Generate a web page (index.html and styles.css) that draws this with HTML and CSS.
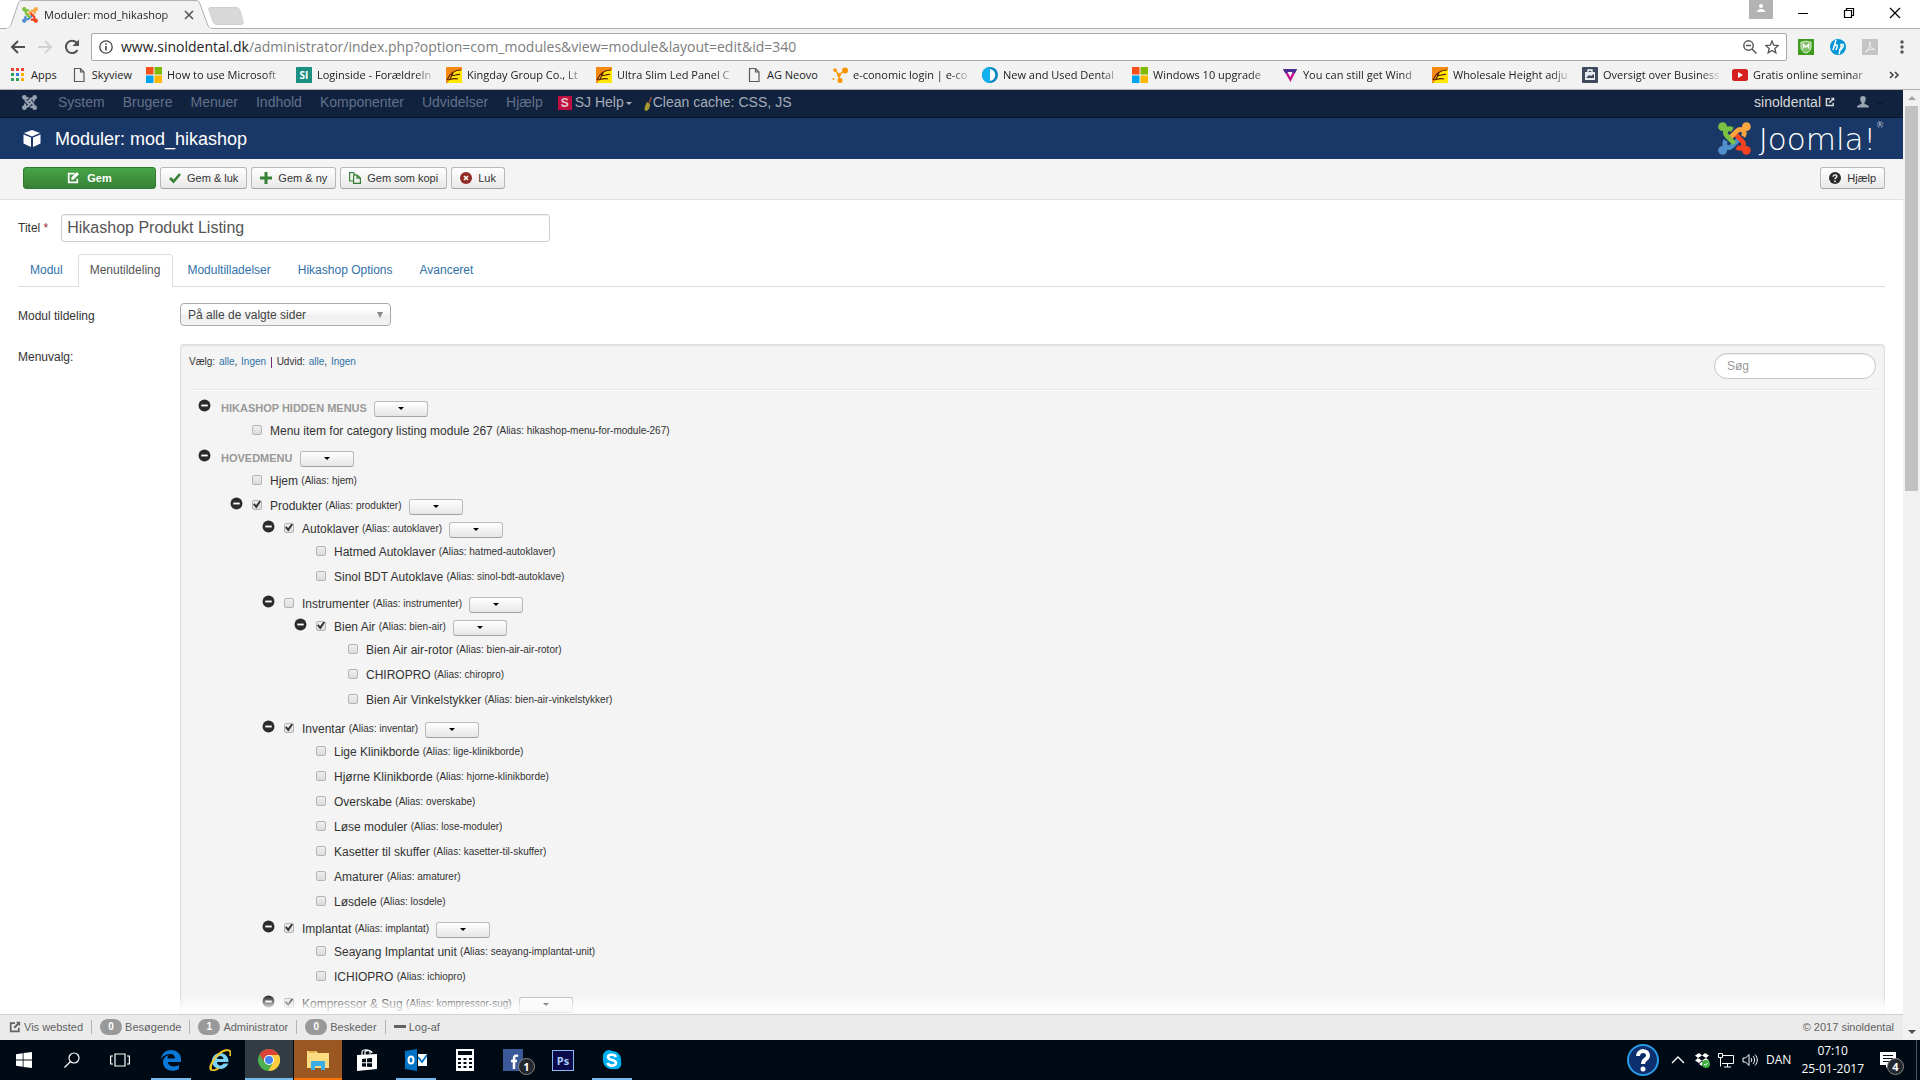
FILE: index.html
```html
<!DOCTYPE html>
<html lang="da">
<head>
  <meta charset="utf-8">
  <title>Moduler: mod_hikashop</title>
  <meta name="viewport" content="width=device-width, initial-scale=1">
  <link rel="stylesheet" href="styles.css">
</head>
<body>

<svg class="sprite" aria-hidden="true">
  <symbol id="joomla" viewBox="0 0 32 32">
    <g fill="none" stroke-width="4.6">
      <path stroke="#4f90cd" d="M7.500 18C5 22 8 26 12 24.500L14 23L21 16"/>
      <path stroke="#f44321" d="M18 24.500C22 27 26 24 24.500 20L23 18L16 11"/>
      <path stroke="#f9a541" d="M24.500 14C27 10 24 6 20 7.500L18 9L11 16"/>
      <path stroke="#7ac143" d="M14 7.500C10 5 6 8 7.500 12L9 14L16 21"/>
    </g>
    <circle cx="4.500" cy="4.500" r="4.300" fill="#7ac143"/>
    <circle cx="27.500" cy="4.500" r="4.300" fill="#f9a541"/>
    <circle cx="4.500" cy="27.500" r="4.300" fill="#4f90cd"/>
    <circle cx="27.500" cy="27.500" r="4.300" fill="#f44321"/>
  </symbol>
  <symbol id="joomla-mono" viewBox="0 0 32 32">
    <g fill="none" stroke="currentColor" stroke-width="4.500">
      <path d="M7 18C5 22 8 26 12 24.500L14 23L22 15"/>
      <path d="M18 24.500C22 27 26 24 24.500 20L23 18L15 10"/>
      <path d="M24.500 14C27 10 24 6 20 7.500L18 9L10 17"/>
      <path d="M14 7.500C10 5 6 8 7.500 12L9 14L17 22"/>
    </g>
    <g fill="currentColor"><circle cx="5" cy="5" r="5"/><circle cx="27" cy="5" r="5"/><circle cx="5" cy="27" r="5"/><circle cx="27" cy="27" r="5"/></g>
  </symbol>
  <symbol id="page" viewBox="0 0 16 16"><path d="M3.500 1.500h6l3.500 3.500v9.500h-9.500zM9.500 1.500v3.500h3.500" fill="none" stroke="#5a5a5a" stroke-width="1.200"/></symbol>
  <symbol id="microsoft" viewBox="0 0 16 16"><path fill="#f6511d" d="M0 0h7.500v7.500H0z"/><path fill="#7fba00" d="M8.500 0H16v7.500H8.500z"/><path fill="#00a4ef" d="M0 8.500h7.500V16H0z"/><path fill="#ffb900" d="M8.500 8.500H16V16H8.500z"/></symbol>
  <symbol id="trade" viewBox="0 0 16 16"><path fill="#ffe600" d="M0 0h16v16H0z"/><path fill="#f58a12" d="M0 0h16v3C8 3 3 8 2 16H0z"/><path d="M1 13C4 6 9 3 15 3M4 12l3-6M5 8.500c3 1 6-2 9-1M2 13c4-1 6-2 10-1" fill="none" stroke="#5a1c00" stroke-width="1.200"/></symbol>
  <symbol id="toggle" viewBox="0 0 14 14"><circle cx="7" cy="7" r="6.400" fill="#2b2b2b"/><path d="M3.500 6h7v2h-7z" fill="#fff"/></symbol>
  <symbol id="external" viewBox="0 0 14 14"><path d="M7 2.500H2v9.500h9.500V8" fill="none" stroke="currentColor" stroke-width="2"/><path d="M8 1h5v5l-1.700-1.700L7 8.700 5.300 7l4.400-4.300z" fill="currentColor"/></symbol>
</svg>

<header class="browser">
  <div class="tabstrip">
    <div class="tab">
      <svg class="tab-edge" viewBox="0 0 206 29" preserveAspectRatio="none"><path d="M0 28.500C4 28.500 5 25 6 22L12 4C13 1 14 .5 16 .5H190C192 .5 193 1 194 4L201 23C202 26 203 28.500 206 28.500" fill="#f2f2f2" stroke="#b0b0b0"/><path d="M1 29h204" stroke="#f2f2f2" stroke-width="2"/></svg>
      <svg class="icon16"><use href="#joomla"/></svg>
      <span class="tab-title">Moduler: mod_hikashop</span>
      <button class="tab-close" aria-label="Luk fane"><svg viewBox="0 0 10 10"><path d="M1 1l8 8M9 1L1 9" stroke="#555" stroke-width="1.600"/></svg></button>
    </div>
    <svg class="newtab" viewBox="0 0 36 18"><path d="M3 .5h25c2 0 3 1 4 3l3 11c.5 2 0 3-2 3H9c-2 0-3-1-4-3L1 3C.5 1 1 .5 3 .5z" fill="#d8d8d8" stroke="#cfcfcf"/></svg>
    <div class="window-buttons">
      <svg class="profile" viewBox="0 0 24 19"><path d="M0 0h24v19H0z" fill="#b3b3b3"/><circle cx="12" cy="6" r="2" fill="#fff"/><path d="M8 12c0-4 8-4 8 0z" fill="#fff"/></svg>
      <svg class="win-btn" viewBox="0 0 12 12"><path d="M1 6.500h10" stroke="#000"/></svg>
      <svg class="win-btn" viewBox="0 0 12 12"><path d="M1.500 3.500h7v7h-7zM3.500 3V1.500h7v7H9" fill="none" stroke="#000" stroke-width="1.200"/></svg>
      <svg class="win-btn" viewBox="0 0 12 12"><path d="M1 1l10 10M11 1L1 11" stroke="#000" stroke-width="1.200"/></svg>
    </div>
  </div>

  <div class="addressbar">
    <svg class="nav-icon" viewBox="0 0 16 16"><path d="M15 8H2M8 2L2 8l6 6" fill="none" stroke="#505050" stroke-width="2"/></svg>
    <svg class="nav-icon" viewBox="0 0 16 16"><path d="M1 8h13M8 2l6 6-6 6" fill="none" stroke="#d2d2d2" stroke-width="2"/></svg>
    <svg class="nav-icon" viewBox="0 0 16 16"><path d="M13.500 11A6.200 6.200 0 1 1 12.500 3.500" fill="none" stroke="#505050" stroke-width="2"/><path d="M15 .5V7H8.500z" fill="#505050"/></svg>
    <div class="omnibox">
      <svg class="icon14" viewBox="0 0 14 14"><circle cx="7" cy="7" r="6.200" fill="none" stroke="#444" stroke-width="1.300"/><path d="M6.200 6h1.600v4.500H6.200zM6.200 3.200h1.600v1.600H6.200z" fill="#444"/></svg>
      <div class="url"><span class="host">www.sinoldental.dk</span>/administrator/index.php?option=com_modules&amp;view=module&amp;layout=edit&amp;id=340</div>
      <svg class="icon14" viewBox="0 0 14 14"><circle cx="5.500" cy="5.500" r="4.700" fill="none" stroke="#555" stroke-width="1.400"/><path d="M3 5.500h5M9 9l4.500 4.500" stroke="#555" stroke-width="1.500"/></svg>
      <svg class="icon14" viewBox="0 0 14 14"><path d="M7 1l1.700 4.200 4.600.3-3.500 2.900 1.100 4.500L7 10.500l-3.900 2.400 1.100-4.500L.7 5.500l4.600-.3z" fill="none" stroke="#555" stroke-width="1.300"/></svg>
    </div>
    <div class="extensions">
      <svg class="icon16" viewBox="0 0 16 16"><path d="M0 0h16v16H0z" fill="#3f9b1b"/><path d="M3 3c2 0 4-.5 5-1 1 .5 3 1 5 1v5c0 3-2 5-5 6-3-1-5-3-5-6z" fill="#7fc062" stroke="#e6f3df"/><path d="M5.500 9.500V5.500L8 8l2.500-2.500v4" fill="none" stroke="#fff" stroke-width="1.500"/></svg>
      <svg class="icon16" viewBox="0 0 16 16"><circle cx="8" cy="8" r="8" fill="#0096d6"/><path d="M6 1L3 11M4 7.500c3-3 4-1 3 1L6 11M9 15l3-10M10 6c3-2 4 0 3 2s-2 3-4 2.500" fill="none" stroke="#fff" stroke-width="1.500"/></svg>
      <svg class="icon16" viewBox="0 0 16 16"><path d="M0 0h16v16H0z" fill="#c4c4c4"/><path d="M3 13c3-1 6-7 5-10-2 1 1 7 5 7.500-3-1-7 0-10 2.500z" fill="none" stroke="#f2f2f2"/></svg>
      <svg class="icon16" viewBox="0 0 16 16"><g fill="#555"><circle cx="8" cy="3" r="1.700"/><circle cx="8" cy="8" r="1.700"/><circle cx="8" cy="13" r="1.700"/></g></svg>
    </div>
  </div>

  <nav class="bookmarks">
    <a href="#" class="short"><svg class="icon16" viewBox="0 0 16 16"><path fill="#ea4335" d="M1 1h3v3H1zM6 1h3v3H6zM11 1h3v3h-3z"/><path fill="#34a05a" d="M1 6h3v3H1zM1 11h3v3H1zM6 11h3v3H6z"/><path fill="#2f7de1" d="M6 6h3v3H6z"/><path fill="#fbb000" d="M11 6h3v3h-3zM11 11h3v3h-3z"/></svg><span>Apps</span></a>
    <a href="#" class="short"><svg class="icon16"><use href="#page"/></svg><span>Skyview</span></a>
    <a href="#"><svg class="icon16"><use href="#microsoft"/></svg><span>How to use Microsoft</span></a>
    <a href="#"><b class="si icon16">SI</b><span>Loginside - ForældreIn</span></a>
    <a href="#"><svg class="icon16"><use href="#trade"/></svg><span>Kingday Group Co., Lt</span></a>
    <a href="#"><svg class="icon16"><use href="#trade"/></svg><span>Ultra Slim Led Panel C</span></a>
    <a href="#" class="short"><svg class="icon16"><use href="#page"/></svg><span>AG Neovo</span></a>
    <a href="#"><svg class="icon16" viewBox="0 0 16 16"><path d="M3 3l4 5 5-4M7 8v5" fill="none" stroke="#f90" stroke-width="1.500"/><g fill="#f79400"><circle cx="3" cy="3" r="1.800"/><circle cx="13" cy="3.500" r="3"/><circle cx="7" cy="8" r="2"/><circle cx="8" cy="13.500" r="2.500"/><circle cx="1.500" cy="12" r="1"/></g></svg><span>e-conomic login | e-co</span></a>
    <a href="#"><svg class="icon16" viewBox="0 0 16 16"><circle cx="8" cy="8" r="8" fill="#0b87c0"/><path d="M8 0a8 8 0 0 0 0 16z" fill="#12b0ee"/><path d="M8 2c7 1 7 11 0 12z" fill="#f4fafd"/></svg><span>New and Used Dental</span></a>
    <a href="#"><svg class="icon16"><use href="#microsoft"/></svg><span>Windows 10 upgrade</span></a>
    <a href="#"><svg class="icon16" viewBox="0 0 16 16"><path d="M1 2h14l-6.500 13z" fill="#c2188f"/><path d="M1 2h14l-2 4H3z" fill="#4b2e91"/><path d="M5.500 5h5L8.300 10z" fill="#fff"/></svg><span>You can still get Wind</span></a>
    <a href="#"><svg class="icon16"><use href="#trade"/></svg><span>Wholesale Height adju</span></a>
    <a href="#"><svg class="icon16" viewBox="0 0 16 16"><rect width="16" height="16" rx="1" fill="#3e4a5c"/><path d="M6 5V3h4v2" fill="none" stroke="#fff" stroke-width="1.300"/><path d="M3 5h10v8H3z" fill="#e9ecef"/><path d="M4 11l3-3 2 1 3-2v4z" fill="#3e4a5c"/></svg><span>Oversigt over Business</span></a>
    <a href="#"><svg class="icon16" viewBox="0 0 16 16"><rect y="2" width="16" height="12" rx="2.500" fill="#d6201f"/><path d="M6 5l5 3-5 3z" fill="#fff"/></svg><span>Gratis online seminar</span></a>
    <a href="#" class="overflow" aria-label="Flere bogmærker"><svg class="icon12" viewBox="0 0 12 12"><path d="M2 3l3 3-3 3M7 3l3 3-3 3" fill="none" stroke="#444" stroke-width="1.600"/></svg></a>
  </nav>
</header>

<div class="viewport">
  <div class="admin">
    <nav class="navbar">
      <a href="#" class="brand" aria-label="Joomla"><svg><use href="#joomla-mono"/></svg></a>
      <a href="#">System</a>
      <a href="#">Brugere</a>
      <a href="#">Menuer</a>
      <a href="#">Indhold</a>
      <a href="#">Komponenter</a>
      <a href="#">Udvidelser</a>
      <a href="#">Hjælp</a>
      <a href="#" class="extra"><b class="sj">S</b>SJ Help<i class="caret"></i></a>
      <span class="extra cache"><svg class="broom" viewBox="0 0 8 14"><path d="M7.500 0L5 6" stroke="#9a4b35" stroke-width="1.500"/><path d="M3 5l3 2c0 4-2 7-4 7S0 10 3 5z" fill="#a79a32"/></svg>Clean cache: <a href="#">CSS</a>, <a href="#">JS</a></span>
      <a href="#" class="site">sinoldental <svg class="icon10"><use href="#external"/></svg></a>
      <a href="#" class="user" aria-label="Bruger"><svg class="icon12" viewBox="0 0 12 12"><path d="M6 0c4 0 3 5 1.500 6.500V8C10 9 12 9 12 11.500H0C0 9 2 9 4.500 8V6.500C3 5 2 0 6 0z" fill="#9aa3b2"/></svg><i class="caret"></i></a>
    </nav>

    <header class="page-header">
      <svg class="cube" viewBox="0 0 18 18"><path d="M9 0l8 3-8 3.500L1 3zM.5 4.500l7.500 3V17L.5 13.500zM17.500 4.500l-7.500 3V17l7.500-3.500z" fill="#fff"/></svg>
      <h1>Moduler: mod_hikashop</h1>
      <div class="logo"><svg class="logo-mark"><use href="#joomla"/></svg><span>Joomla!</span><sup>®</sup></div>
    </header>

    <div class="toolbar">
      <button class="btn btn-success"><svg class="icon12" viewBox="0 0 14 14"><path d="M9 2H2v10h10V8" fill="none" stroke="#fff" stroke-width="2"/><path d="M5 6.500L11.500 0 14 2.500 7.500 9H5z" fill="#fff"/></svg>Gem</button>
      <button class="btn"><svg class="icon12" viewBox="0 0 12 12"><path d="M1 6l3.500 3.500L11 2" fill="none" stroke="#378137" stroke-width="2.600"/></svg>Gem &amp; luk</button>
      <button class="btn"><svg class="icon12" viewBox="0 0 12 12"><path d="M6 0v12M0 6h12" stroke="#378137" stroke-width="3"/></svg>Gem &amp; ny</button>
      <button class="btn"><svg class="icon12" viewBox="0 0 12 12"><path d="M4 9H.6V.6h3.600L7 3.500M4.600 3h3.600l3.200 3v5.400H4.600zM8 3v3.200h3.400" fill="none" stroke="#378137" stroke-width="1.200"/></svg>Gem som kopi</button>
      <button class="btn"><svg class="icon12" viewBox="0 0 12 12"><circle cx="6" cy="6" r="6" fill="#942a25"/><path d="M4 4l4 4M8 4L4 8" stroke="#fff" stroke-width="1.600"/></svg>Luk</button>
      <button class="btn btn-help"><svg class="icon12" viewBox="0 0 12 12"><circle cx="6" cy="6" r="6" fill="#2b2b2b"/><path d="M4.200 4.700c0-2.600 4-2.300 3.600 0C7.600 5.800 6 5.800 6 7.200" fill="none" stroke="#fff" stroke-width="1.400"/><circle cx="6" cy="9.300" r=".9" fill="#fff"/></svg>Hjælp</button>
    </div>

    <main class="content">
      <div class="title-row">
        <label for="title">Titel <span class="star">*</span></label>
        <input id="title" class="title-input" type="text" value="Hikashop Produkt Listing">
      </div>

      <nav class="nav-tabs">
        <a href="#">Modul</a>
        <a href="#" class="active">Menutildeling</a>
        <a href="#">Modultilladelser</a>
        <a href="#">Hikashop Options</a>
        <a href="#">Avanceret</a>
      </nav>

      <div class="control-group">
        <label class="control-label" for="assignment">Modul tildeling</label>
        <div class="select-wrap">
          <select id="assignment"><option>På alle de valgte sider</option></select>
        </div>
      </div>

      <div class="control-group menu-group">
        <div class="control-label">Menuvalg:</div>
        <section class="well">
          <div class="well-head">
            <div class="picks">Vælg: <a href="#">alle</a>, <a href="#">Ingen</a> <i class="bar"></i> Udvid: <a href="#">alle</a>, <a href="#">Ingen</a></div>
            <input class="search" type="text" placeholder="Søg" aria-label="Søg">
          </div>

          <ul class="tree">
            <li>
              <div class="row"><svg class="toggle"><use href="#toggle"/></svg><h2>HIKASHOP HIDDEN MENUS</h2><button class="drop" aria-label="Valg"></button></div>
              <ul>
                <li class="leaf"><label class="row"><input type="checkbox">Menu item for category listing module 267 <small>(Alias: hikashop-menu-for-module-267)</small></label></li>
              </ul>
            </li>
            <li>
              <div class="row"><svg class="toggle"><use href="#toggle"/></svg><h2>HOVEDMENU</h2><button class="drop" aria-label="Valg"></button></div>
              <ul>
                <li class="leaf"><label class="row"><input type="checkbox">Hjem <small>(Alias: hjem)</small></label></li>
                <li>
                  <div class="row"><svg class="toggle"><use href="#toggle"/></svg><label class="row"><input type="checkbox" checked>Produkter <small>(Alias: produkter)</small></label><button class="drop" aria-label="Valg"></button></div>
                  <ul>
                    <li>
                      <div class="row"><svg class="toggle"><use href="#toggle"/></svg><label class="row"><input type="checkbox" checked>Autoklaver <small>(Alias: autoklaver)</small></label><button class="drop" aria-label="Valg"></button></div>
                      <ul>
                        <li class="leaf"><label class="row"><input type="checkbox">Hatmed Autoklaver <small>(Alias: hatmed-autoklaver)</small></label></li>
                        <li class="leaf"><label class="row"><input type="checkbox">Sinol BDT Autoklave <small>(Alias: sinol-bdt-autoklave)</small></label></li>
                      </ul>
                    </li>
                    <li>
                      <div class="row"><svg class="toggle"><use href="#toggle"/></svg><label class="row"><input type="checkbox">Instrumenter <small>(Alias: instrumenter)</small></label><button class="drop" aria-label="Valg"></button></div>
                      <ul>
                        <li>
                          <div class="row"><svg class="toggle"><use href="#toggle"/></svg><label class="row"><input type="checkbox" checked>Bien Air <small>(Alias: bien-air)</small></label><button class="drop" aria-label="Valg"></button></div>
                          <ul>
                            <li class="leaf"><label class="row"><input type="checkbox">Bien Air air-rotor <small>(Alias: bien-air-air-rotor)</small></label></li>
                            <li class="leaf"><label class="row"><input type="checkbox">CHIROPRO <small>(Alias: chiropro)</small></label></li>
                            <li class="leaf"><label class="row"><input type="checkbox">Bien Air Vinkelstykker <small>(Alias: bien-air-vinkelstykker)</small></label></li>
                          </ul>
                        </li>
                      </ul>
                    </li>
                    <li>
                      <div class="row"><svg class="toggle"><use href="#toggle"/></svg><label class="row"><input type="checkbox" checked>Inventar <small>(Alias: inventar)</small></label><button class="drop" aria-label="Valg"></button></div>
                      <ul>
                        <li class="leaf"><label class="row"><input type="checkbox">Lige Klinikborde <small>(Alias: lige-klinikborde)</small></label></li>
                        <li class="leaf"><label class="row"><input type="checkbox">Hjørne Klinikborde <small>(Alias: hjorne-klinikborde)</small></label></li>
                        <li class="leaf"><label class="row"><input type="checkbox">Overskabe <small>(Alias: overskabe)</small></label></li>
                        <li class="leaf"><label class="row"><input type="checkbox">Løse moduler <small>(Alias: lose-moduler)</small></label></li>
                        <li class="leaf"><label class="row"><input type="checkbox">Kasetter til skuffer <small>(Alias: kasetter-til-skuffer)</small></label></li>
                        <li class="leaf"><label class="row"><input type="checkbox">Amaturer <small>(Alias: amaturer)</small></label></li>
                        <li class="leaf"><label class="row"><input type="checkbox">Løsdele <small>(Alias: losdele)</small></label></li>
                      </ul>
                    </li>
                    <li>
                      <div class="row"><svg class="toggle"><use href="#toggle"/></svg><label class="row"><input type="checkbox" checked>Implantat <small>(Alias: implantat)</small></label><button class="drop" aria-label="Valg"></button></div>
                      <ul>
                        <li class="leaf"><label class="row"><input type="checkbox">Seayang Implantat unit <small>(Alias: seayang-implantat-unit)</small></label></li>
                        <li class="leaf"><label class="row"><input type="checkbox">ICHIOPRO <small>(Alias: ichiopro)</small></label></li>
                      </ul>
                    </li>
                    <li>
                      <div class="row"><svg class="toggle"><use href="#toggle"/></svg><label class="row"><input type="checkbox" checked>Kompressor &amp; Sug <small>(Alias: kompressor-sug)</small></label><button class="drop" aria-label="Valg"></button></div>
                    </li>
                  </ul>
                </li>
              </ul>
            </li>
          </ul>
        </section>
      </div>
    </main>

    <footer class="status">
      <a href="#"><svg class="icon12"><use href="#external"/></svg>Vis websted</a>
      <span><b class="badge">0</b>Besøgende</span>
      <span><b class="badge">1</b>Administrator</span>
      <a href="#"><b class="badge">0</b>Beskeder</a>
      <a href="#"><i class="dash"></i>Log-af</a>
      <p>© 2017 sinoldental</p>
    </footer>
  </div>

  <div class="scrollbar">
    <i class="arrow-up"></i>
    <div class="track"><div class="thumb"></div></div>
    <i class="arrow-down"></i>
  </div>
</div>

<footer class="taskbar">
  <button aria-label="Start"><svg viewBox="0 0 16 16"><path d="M0 2.200l6.700-1v6.400H0zM7.500 1.100L16 0v7.600H7.500zM0 8.400h6.700v6.400l-6.700-1zM7.500 8.400H16V16l-8.500-1.100z" fill="#fff"/></svg></button>
  <button aria-label="Søg"><svg viewBox="0 0 16 16"><circle cx="10" cy="6" r="5" fill="none" stroke="#fff" stroke-width="1.200"/><path d="M6.500 9.500L.5 15.500" stroke="#fff" stroke-width="1.300"/></svg></button>
  <button aria-label="Opgavevisning"><svg class="wide" viewBox="0 0 20 16"><path d="M5 2h10v12H5zM3 4H.6v8H3M17 4h2.400v8H17" fill="none" stroke="#fff" stroke-width="1.200"/></svg></button>
  <div class="apps">
    <button class="open" aria-label="Edge"><svg class="big" viewBox="0 0 22 22"><path d="M1 10C2 4 6 1 11 1c6 0 10 4 10 9v3H8c0 4 6 6 11 3v4c-7 4-16 1-16-7 0-4 3-6 6-7-1 1-1.500 2-1.500 3.500H15C15 3 5 4 1 10z" fill="#0a78d6"/></svg></button>
    <button aria-label="Internet Explorer"><svg class="big" viewBox="0 0 22 22"><path fill-rule="evenodd" d="M19.500 14.500C18 18 15 20 11 20c-5 0-8-4-8-8s3-8 8-8 9 4 8.500 9H8c0 4 5 4.500 6.500 1.500zM8 10h6.500c-.5-4-6-4-6.500 0z" fill="#7ad3f7"/><path d="M3 14C-1 25 7 21 10 19M21 7c3-10-9-6-15 2-3 4-6 10-4 12" fill="none" stroke="#f2c61f" stroke-width="1.800"/></svg></button>
    <button class="open current" aria-label="Chrome"><svg class="big" viewBox="0 0 22 22"><circle cx="11" cy="11" r="11" fill="#4caf50"/><path d="M20.500 5.500A11 11 0 0 1 10.500 22L15 13.500 11 6h9.500z" fill="#ffcd40"/><path d="M1.500 5.500A11 11 0 0 1 20.500 5.500L20.700 6H11L6 12z" fill="#db4437"/><circle cx="11" cy="11" r="5" fill="#fff"/><circle cx="11" cy="11" r="4" fill="#4285f4"/></svg></button>
    <button class="open alert" aria-label="Stifinder"><svg class="big" viewBox="0 0 22 22"><path d="M0 2h9l2 2h11v15H0z" fill="#fbdc82"/><path d="M2 3h6" stroke="#c78d1b"/><path d="M4 12h14v9h-4v-4H8v4H4z" fill="#3aaee4"/></svg></button>
    <button aria-label="Store"><svg class="big" viewBox="0 0 22 22"><path d="M1 6l20-1v15L1 22z" fill="#fff"/><path d="M6 7V3c0-3 8-3 8 0v2M9 6V3c0-2 7-2 7 1" fill="none" stroke="#fff" stroke-width="1.200"/><path d="M6 10l4-.4v3.600H6zM11 9.500l5-.5v4.200h-5zM6 14.200h4v3.600l-4-.3zM11 14.200h5V18l-5-.2z" fill="#000a14"/></svg></button>
    <button class="open" aria-label="Outlook"><svg class="big" viewBox="0 0 22 22"><path d="M0 2l12-2v22L0 20z" fill="#0072c6"/><path d="M13 5h9v12h-9z" fill="#fff"/><path d="M13 8l4 5 5-7" fill="none" stroke="#0072c6" stroke-width="1.800"/><ellipse cx="6" cy="11" rx="2.500" ry="3.500" fill="none" stroke="#fff" stroke-width="2"/></svg></button>
    <button aria-label="Lommeregner"><svg class="big" viewBox="0 0 22 22"><path d="M2 0h18v22H2z" fill="#fff"/><path d="M4 2h14v4H4z" fill="#000a14"/><path d="M4 10h14M4 14h14M4 18h14" stroke="#000a14" stroke-width="2" stroke-dasharray="3 2.500"/></svg></button>
    <button aria-label="Facebook"><svg class="big" viewBox="0 0 22 22"><path d="M0 0h20v22H0z" fill="#3b5998"/><path d="M15 7c-3-1-4 0-4 3v10M8 12h6" fill="none" stroke="#fff" stroke-width="2.500"/></svg><b class="count">1</b></button>
    <button aria-label="Photoshop"><b class="ps">Ps</b></button>
    <button class="open" aria-label="Skype"><svg class="big" viewBox="0 0 22 22"><path d="M11 2c6 0 10 5 9 11a5.500 5.500 0 0 1-7 7C6 21 1 16 2 9 1 3 7-1 11 2z" fill="#00aff0"/><path d="M15 8c-1-3-8-3-8 0 0 4 8 2 8 6 0 3-7 4-8.500 0" fill="none" stroke="#fff" stroke-width="2.600"/></svg></button>
  </div>

  <div class="tray">
    <svg class="help" viewBox="0 0 32 32"><circle cx="16" cy="16" r="15" fill="#0d2f6d" stroke="#2a9be6" stroke-width="2"/><path d="M11 12c0-7 11-6 10 0-.5 4-5 3-5 8" fill="none" stroke="#fff" stroke-width="4"/><circle cx="16" cy="25" r="2.500" fill="#fff"/></svg>
    <svg class="tray-icon" viewBox="0 0 16 16"><path d="M2 11l6-6 6 6" fill="none" stroke="#fff" stroke-width="1.300"/></svg>
    <svg class="tray-icon" viewBox="0 0 16 16"><path d="M5 1L1 3.500 4 6l4-2.500zM11 1l4 2.500L12 6 8 3.500zM1 8.500L4 6l4 2.500L5 11zM15 8.500L12 6 8 8.500l3 2.500zM5 12l3-2.500 3 2.500-3 2z" fill="#fff"/><circle cx="12" cy="12" r="4" fill="#3cae3c"/><path d="M10 12l1.500 1.500L14 10.500" fill="none" stroke="#fff"/></svg>
    <svg class="tray-icon" viewBox="0 0 16 16"><path d="M4 3.500h11.500v8H4M9.500 12v3M6 15h7M.5 1.500h4v4h-4zM2.500 6v8.500" fill="none" stroke="#fff"/></svg>
    <svg class="tray-icon" viewBox="0 0 16 16"><path d="M1 6h2.500L7 2.500v11L3.500 10H1zM9 6c1 1 1 3 0 4M11 4c2 2 2 6 0 8M13 2.500c3 3 3 8 0 11" fill="none" stroke="#fff"/></svg>
    <span class="lang">DAN</span>
    <time>07:10<br>25-01-2017</time>
    <div class="action"><svg class="icon16" viewBox="0 0 16 16"><path d="M0 0h16v13H9l-3 3v-3H0z" fill="#fff"/><path d="M3 3.500h10M3 6.500h10M3 9.500h7" stroke="#000a14"/></svg><b class="count">4</b></div>
  </div>
</footer>

</body>
</html>
```
FILE: styles.css
```css
* {
    box-sizing: border-box;
}

body {
    margin: 0;
    height: 100vh;
    display: flex;
    flex-direction: column;
    overflow: hidden;
    background: #fff;
    color: #333;
    font-family: "Liberation Sans", Arial, sans-serif;
    font-size: 12px;
    line-height: 16px;
}

a {
    color: #3071a9;
    text-decoration: none;
}

button, input, select {
    font-family: inherit;
    font-size: inherit;
}

svg {
    flex: none;
    display: block;
}

.sprite { position: absolute; width: 0; height: 0; }

.icon10 { width: 10px; height: 10px; }
.icon12 { width: 12px; height: 12px; }
.icon14 { width: 14px; height: 14px; }
.icon16 { width: 16px; height: 16px; }

/* browser */
.browser {
    flex: none;
    background: #f2f2f2;
    border-bottom: 1px solid #b0b0b0;
    font-family: "Open Sans", "Noto Sans", sans-serif;
    font-size: 11px;
    color: #222;
}

.tabstrip {
    display: flex;
    height: 29px;
    padding-left: 6px;
    background: #fff;
    border-bottom: 1px solid #b0b0b0;
}

.tab {
    position: relative;
    display: flex;
    align-items: center;
    width: 206px;
    height: 29px;
    padding: 0 16px;
    gap: 6px;
}

.tab > * { position: relative; }

.tab .tab-edge {
    position: absolute;
    left: 0;
    top: 0;
    width: 100%;
    height: 100%;
}

.tab-title {
    flex: 1;
    white-space: nowrap;
    mask-image: linear-gradient(to right, #000 90%, rgba(0, 0, 0, .4));
}

.tab-close {
    width: 14px;
    height: 14px;
    padding: 2px;
    border: 0;
    background: none;
}

.newtab {
    width: 36px;
    height: 18px;
    margin: 7px 0 0 -4px;
}

.window-buttons {
    display: flex;
    margin-left: auto;
    padding-right: 19px;
    gap: 34px;
}

.profile { width: 24px; height: 19px; margin-right: -10px; }
.win-btn { width: 12px; height: 12px; margin-top: 7px; }

.addressbar {
    display: flex;
    align-items: center;
    height: 33px;
    padding: 4px 10px 1px;
    gap: 11px;
}

.nav-icon { width: 16px; height: 16px; }

.omnibox {
    flex: 1;
    display: flex;
    align-items: center;
    height: 28px;
    padding: 0 7px;
    gap: 8px;
    background: #fff;
    border: 1px solid #a9a9a9;
    border-radius: 2px;
    font-size: 14px;
}

.url {
    flex: 1;
    color: #7d7d7d;
}

.host { color: #222; }

.extensions {
    display: flex;
    gap: 16px;
}

.bookmarks {
    display: flex;
    align-items: center;
    height: 27px;
    padding: 0 20px 2px 10px;
    gap: 12px;
}

.bookmarks a {
    display: flex;
    align-items: center;
    gap: 5px;
    color: #222;
}

.bookmarks span {
    width: 117px;
    white-space: nowrap;
    mask-image: linear-gradient(to right, #000 98px, rgba(0, 0, 0, .1) 117px);
}

.bookmarks .short { padding-right: 2px; }

.bookmarks .short span {
    width: auto;
    mask-image: none;
}

.bookmarks .overflow { margin-left: auto; }

.si {
    background: #1b9080;
    color: #fff;
    font-size: 10px;
    text-align: center;
}

/* page inside the browser */
.viewport {
    flex: 1;
    min-height: 0;
    display: flex;
}

.admin {
    flex: 1;
    min-width: 0;
    display: flex;
    flex-direction: column;
}

.navbar {
    flex: none;
    display: flex;
    align-items: center;
    height: 28px;
    padding: 0 20px 3px 22px;
    gap: 18px;
    background: #10223e;
    border-bottom: 1px solid #0b172b;
    font-size: 14px;
}

.navbar a { color: #63708a; }
.navbar .brand { color: #98a1b0; }
.brand svg { width: 15px; height: 15px; margin-right: 3px; }
.navbar .extra, .navbar .extra a { color: #a5adb9; }

.extra, .site, .user {
    display: flex;
    align-items: center;
}

.navbar .extra a { margin-left: 4px; }
.navbar .cache { margin-left: -6px; }

.sj {
    width: 14px;
    height: 14px;
    margin: 2px 3px 0 -3px;
    background: #bd1040;
    color: #e9c6d0;
    font-size: 12px;
    line-height: 14px;
    text-align: center;
}

.caret {
    margin: 3px 0 0 2px;
    border: 3px solid transparent;
    border-top-color: currentColor;
    border-bottom: 0;
}

.broom { width: 8px; height: 14px; margin: 4px 1px 0 0; }

.navbar .site {
    margin-left: auto;
    gap: 4px;
    color: #d9d9d9;
}

.user { gap: 6px; }
.navbar .user { color: #0b172b; margin-left: 4px; }

.page-header {
    flex: none;
    display: flex;
    align-items: center;
    height: 41px;
    padding: 0 19px 0 23px;
    background: #1a3867;
    color: #fff;
}

.cube { width: 18px; height: 18px; }

h1 {
    margin: 0 0 0 14px;
    font-size: 18px;
    font-weight: normal;
}

.logo {
    display: flex;
    align-items: center;
    margin-left: auto;
    font-family: "DejaVu Sans Light", "DejaVu Sans", sans-serif;
    font-weight: 200;
    font-size: 31px;
}

.logo-mark { width: 33px; height: 33px; margin-right: 8px; }
.logo sup { align-self: flex-start; font-size: 8px; line-height: 8px; }

.toolbar {
    flex: none;
    display: flex;
    height: 41px;
    padding: 8px 18px 0 23px;
    gap: 4px;
    background: #f4f4f4;
    border-bottom: 1px solid #e0e0e0;
}

.btn {
    display: flex;
    align-items: center;
    justify-content: center;
    gap: 6px;
    height: 22px;
    padding: 0 8px;
    border: 1px solid #b9b9b9;
    border-bottom-color: #a2a2a2;
    border-radius: 3px;
    background: linear-gradient(#fff, #e8e8e8);
    color: #333;
    font-size: 11px;
}

.btn-success {
    width: 133px;
    gap: 8px;
    border-color: #2f7a2f;
    background: linear-gradient(#46a546, #378137);
    color: #fff;
    font-weight: bold;
}

.btn-help { margin-left: auto; }

.content {
    flex: 1;
    min-height: 0;
    padding: 14px 18px 0;
    overflow: hidden;
}

.title-row {
    display: flex;
    align-items: center;
    gap: 13px;
}

.star { color: #942a25; }

.title-input {
    width: 489px;
    height: 28px;
    padding: 0 5px;
    border: 1px solid #ccc;
    border-radius: 3px;
    box-shadow: inset 0 1px 1px #eee;
    color: #555;
    font-size: 16px;
}

.nav-tabs {
    display: flex;
    height: 33px;
    margin-top: 12px;
    gap: 2px;
    border-bottom: 1px solid #ddd;
}

.nav-tabs a {
    height: 33px;
    padding: 7px 12px 7px 11px;
    border: 1px solid transparent;
    border-bottom: 0;
}

.nav-tabs .active {
    border-color: #ddd;
    border-radius: 4px 4px 0 0;
    background: #fff;
    color: #555;
}

.control-group {
    display: flex;
    margin-top: 16px;
}

.menu-group { margin-top: 18px; }

.control-label {
    flex: none;
    width: 162px;
    padding-top: 5px;
}

.select-wrap {
    position: relative;
}

.select-wrap::after {
    content: "";
    position: absolute;
    right: 8px;
    top: 9px;
    border: 3px solid transparent;
    border-top: 6px solid #888;
    border-bottom: 0;
}

.select-wrap select {
    appearance: none;
    width: 211px;
    height: 23px;
    padding: 0 7px;
    border: 1px solid #aaa;
    border-radius: 4px;
    background: linear-gradient(#fff 20%, #f6f6f6 50%, #eee 52%, #f4f4f4);
    color: #444;
}

.well {
    flex: 1;
    min-height: 900px;
    padding: 8px 8px 0;
    border: 1px solid #e0e0e0;
    border-radius: 3px;
    background: #f4f4f4;
    box-shadow: inset 0 1px 2px #ddd;
}

.well-head {
    display: flex;
    justify-content: space-between;
    align-items: flex-start;
    height: 37px;
    border-bottom: 1px solid #e9e9e9;
    box-shadow: 0 1px #fff;
}

.picks {
    padding-top: 1px;
    font-size: 10px;
}

.picks a { margin-left: 1px; }

.bar {
    display: inline-block;
    width: 1px;
    height: 11px;
    margin: 0 2px;
    background: #7a2c6c;
    vertical-align: middle;
}

.search {
    width: 162px;
    height: 26px;
    padding: 0 12px;
    border: 1px solid #c8c8c8;
    border-radius: 13px;
    background: #fff;
    box-shadow: inset 0 1px 1px #eee;
}

.search::placeholder { color: #999; }

/* menu tree */
.tree, .tree ul {
    margin: 0;
    padding: 0;
    list-style: none;
}

.tree {
    padding: 6px 0 0 9px;
}

.tree ul {
    padding: 0 0 2px 32px;
}

.row {
    display: flex;
    align-items: center;
    height: 23px;
    white-space: pre;
}

.leaf {
    height: 25px;
    padding-left: 22px;
}

.toggle {
    width: 13px;
    height: 13px;
    margin: 0 9px 4px 0;
}

.tree h2 {
    margin: 0;
    padding-left: 1px;
    color: #999;
    font-size: 11px;
}

.tree small {
    padding-top: 1px;
    font-size: 10px;
}

.tree input {
    appearance: none;
    width: 10px;
    height: 10px;
    margin: 0 8px 2px 0;
    border: 1px solid #b5b5b5;
    border-radius: 2px;
    background: linear-gradient(#eee, #dcdcdc);
}

.tree input:checked::after {
    content: "";
    display: block;
    width: 8px;
    height: 8px;
    background: #333;
    clip-path: polygon(0 50%, 20% 35%, 38% 60%, 82% 0, 100% 12%, 42% 100%);
}

.drop {
    width: 54px;
    height: 16px;
    margin: 2px 0 0 7px;
    padding: 0;
    border: 1px solid #bbb;
    border-bottom-color: #a2a2a2;
    border-radius: 3px;
    background: linear-gradient(#fff, #e6e6e6);
}

.drop::after {
    content: "";
    display: block;
    width: 0;
    margin: 0 auto;
    border: 3px solid transparent;
    border-top-color: #000;
    border-bottom: 0;
}

/* status bar */
.status {
    position: relative;
    flex: none;
    display: flex;
    align-items: center;
    height: 26px;
    padding: 0 9px 2px;
    background: #ebebeb;
    border-top: 1px solid #d0d0d0;
    color: #626262;
    font-size: 11px;
}

/* fades the content out above the bar */
.status::before {
    content: "";
    position: absolute;
    left: 0;
    right: 0;
    bottom: 26px;
    height: 18px;
    background: linear-gradient(rgba(255, 255, 255, 0), rgba(255, 255, 255, .75) 60%);
}

.status a, .status span {
    display: flex;
    align-items: center;
    gap: 3px;
    padding-right: 8px;
    color: #626262;
}

.status a + span, .status span + span, .status span + a, .status a + a {
    padding-left: 8px;
    border-left: 1px solid #b5b5b5;
    height: 14px;
}

.status p { margin: 0 0 0 auto; }

.badge {
    width: 22px;
    border-radius: 8px;
    background: #999;
    color: #fff;
    font-size: 10px;
    text-align: center;
}

.dash { width: 12px; height: 3px; background: #626262; }

.scrollbar {
    flex: none;
    display: flex;
    flex-direction: column;
    align-items: center;
    width: 17px;
    padding: 6px 0;
    background: #f1f1f1;
}

.track {
    flex: 1;
    display: flex;
    flex-direction: column;
    width: 13px;
    padding-top: 6px;
}

.track::after { content: ""; flex: 7; }
.thumb { flex: 5; background: #c1c1c1; }

.arrow-up, .arrow-down { border: 4px solid transparent; }
.arrow-up { border-top: 0; border-bottom-color: #a3a3a3; }
.arrow-down { border-bottom: 0; border-top-color: #505050; }

/* windows taskbar */
.taskbar {
    flex: none;
    display: flex;
    height: 40px;
    background: #000a14;
    color: #fff;
    font-family: "Open Sans", "Noto Sans", sans-serif;
}

.apps {
    display: flex;
    margin-left: 3px;
    gap: 1px;
}

.taskbar button {
    position: relative;
    display: flex;
    align-items: center;
    justify-content: center;
    width: 48px;
    padding: 0;
    border: 0;
    background: none;
}

.taskbar button svg { width: 16px; height: 16px; }
.taskbar button .wide { width: 20px; }
.taskbar button .big { width: 22px; height: 22px; }

.open::after {
    content: "";
    position: absolute;
    left: 4px;
    right: 4px;
    bottom: 0;
    height: 2px;
    background: #76b9ed;
}

.taskbar .current { background: #333b43; }
.taskbar .alert { background: #9b5722; }
.current::after, .alert::after { left: 0; right: 0; }
.alert::after { background: #ff7300; }

.ps {
    width: 22px;
    height: 21px;
    border: 1px solid #8db7f0;
    background: #0b0a4c;
    color: #a9cdfa;
    font-size: 11px;
    line-height: 19px;
}

.count {
    position: absolute;
    left: 28px;
    top: 18px;
    width: 17px;
    height: 17px;
    border: 1px solid #888;
    border-radius: 50%;
    background: #23282e;
    color: #fff;
    font-size: 11px;
    line-height: 15px;
    text-align: center;
}

.tray {
    display: flex;
    align-items: center;
    margin-left: auto;
    margin-right: 3px;
    gap: 8px;
    border-right: 1px solid #4b525a;
}

.help { width: 32px; height: 32px; margin-right: 3px; }
.tray-icon { width: 16px; height: 16px; }
.tray time { margin-left: 2px; line-height: 18px; text-align: center; }

.action {
    position: relative;
    margin-left: 8px;
    padding-right: 20px;
}

.action .count { left: 7px; top: 6px; }
```
